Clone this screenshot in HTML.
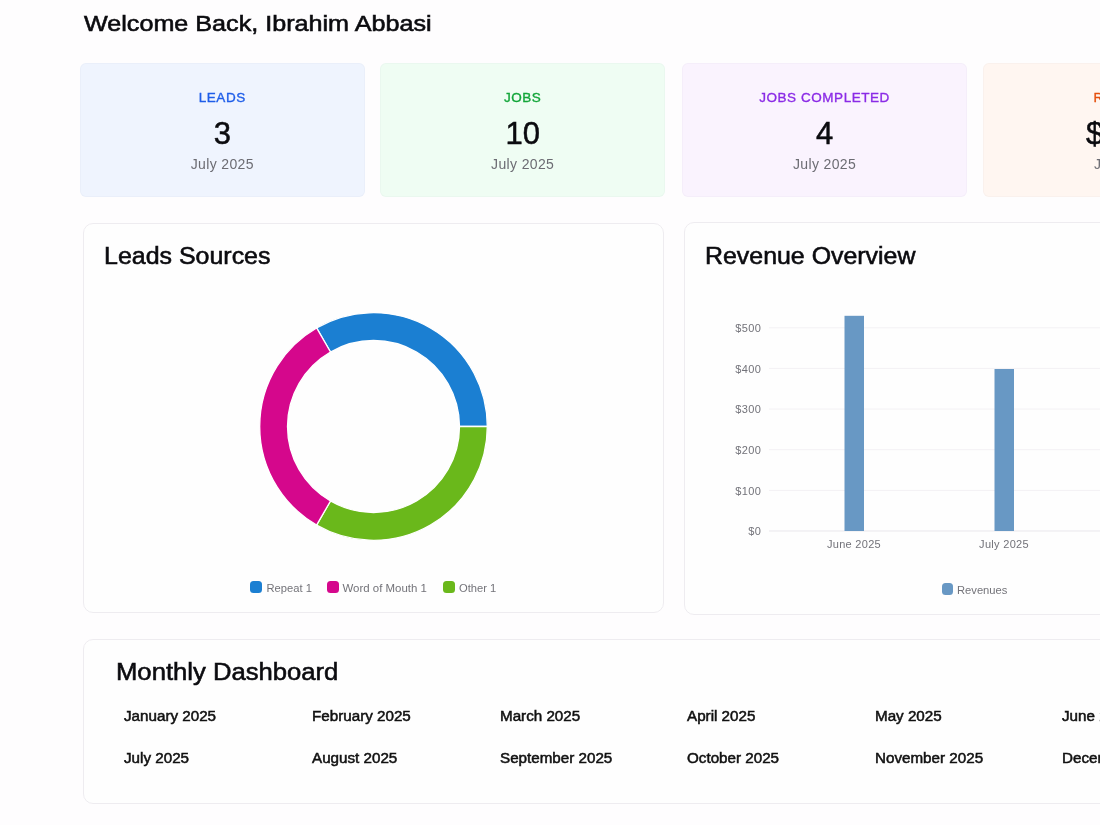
<!DOCTYPE html>
<html><head><meta charset="utf-8">
<style>
*{box-sizing:border-box;margin:0;padding:0}
html,body{width:1100px;height:825px;overflow:hidden;background:#fefdfe;font-family:"Liberation Sans",sans-serif;color:#0b0b0f}
.abs{position:absolute}
h1{position:absolute;left:83px;top:13.1px;font-size:22.6px;font-weight:400;letter-spacing:0px;-webkit-text-stroke:0.6px #0b0b0f;line-height:1;white-space:nowrap;transform:scaleX(1.113);transform-origin:0 0}
.stat{position:absolute;top:62.8px;width:284.5px;height:134.7px;border-radius:6px;box-shadow:inset 0 0 0 1px rgba(60,40,80,0.022)}
.stat .lab{position:absolute;left:0;right:0;top:27.9px;text-align:center;font-size:13.5px;letter-spacing:0.55px;line-height:1;white-space:nowrap}
.stat .num{position:absolute;left:0;right:0;top:55.4px;text-align:center;font-size:31px;line-height:1;-webkit-text-stroke:0.5px #0b0b0f}
.stat .dt{position:absolute;left:0;right:0;top:94.1px;text-align:center;font-size:14px;color:#6c6c73;line-height:1;letter-spacing:0.35px}
.card{position:absolute;border:1px solid #eeecf0;border-radius:10px;background:#fefefe}
.ct{position:absolute;font-size:23px;letter-spacing:0px;-webkit-text-stroke:0.55px #0b0b0f;line-height:1;white-space:nowrap}
.leg{position:absolute;font-size:11.2px;color:#737379;line-height:1;white-space:nowrap}
.sq{position:absolute;width:12px;height:12px;border-radius:3.5px}
.mo{position:absolute;transform:scaleX(1.085);transform-origin:0 0;font-size:14px;letter-spacing:0px;-webkit-text-stroke:0.5px #111;line-height:1;white-space:nowrap;color:#111}
</style></head>
<body>
<div id="root" style="position:absolute;left:0;top:0;width:1100px;height:825px;will-change:transform">
<h1 style="left:84.3px">Welcome Back, Ibrahim Abbasi</h1>
<div class="stat" style="left:80.0px;background:#eff4fe">
  <div class="lab" style="color:#1f5ee9;-webkit-text-stroke:0.35px #1f5ee9">LEADS</div>
  <div class="num">3</div>
  <div class="dt">July 2025</div>
</div>
<div class="stat" style="left:380.4px;background:#effdf3">
  <div class="lab" style="color:#13a63a;-webkit-text-stroke:0.35px #13a63a">JOBS</div>
  <div class="num">10</div>
  <div class="dt">July 2025</div>
</div>
<div class="stat" style="left:682.3px;background:#faf3fe">
  <div class="lab" style="color:#8b2be6;-webkit-text-stroke:0.35px #8b2be6">JOBS COMPLETED</div>
  <div class="num">4</div>
  <div class="dt">July 2025</div>
</div>
<div class="stat" style="left:983.3px;background:#fff6f1">
  <div class="lab" style="padding-left:5px;color:#e5500e;-webkit-text-stroke:0.35px #e5500e">REVENUE</div>
  <div class="num"><span style="letter-spacing:2.5px">$400</span></div>
  <div class="dt">July 2025</div>
</div>

<div class="card" style="left:83px;top:223px;width:581px;height:390px"></div>
<div class="ct" style="left:104.0px;top:245.1px;transform:scaleX(1.085);transform-origin:0 0">Leads Sources</div>
<div class="card" style="left:684px;top:222px;width:600px;height:393px"></div>
<div class="ct" style="left:704.5px;top:245.1px;transform:scaleX(1.083);transform-origin:0 0">Revenue Overview</div>
<div class="card" style="left:83px;top:639px;width:1200px;height:165px"></div>
<div class="ct" style="left:116.0px;top:660.9px;transform:scaleX(1.115);transform-origin:0 0">Monthly Dashboard</div>
<svg class="abs" style="left:0;top:0;font-family:'Liberation Sans'" width="1100" height="825">
<path d="M316.60 327.95A113.8 113.8 0 0 1 487.30 426.50L459.50 426.50A86.0 86.0 0 0 0 330.50 352.02Z" fill="#1b7fd2" stroke="#fff" stroke-width="1.3"/>
<path d="M487.30 426.50A113.8 113.8 0 0 1 316.60 525.05L330.50 500.98A86.0 86.0 0 0 0 459.50 426.50Z" fill="#6ab81b" stroke="#fff" stroke-width="1.3"/>
<path d="M316.60 525.05A113.8 113.8 0 0 1 316.60 327.95L330.50 352.02A86.0 86.0 0 0 0 330.50 500.98Z" fill="#d5078c" stroke="#fff" stroke-width="1.3"/>
<line x1="769" y1="531.0" x2="1100" y2="531.0" stroke="#e9e7ec" stroke-width="1"/>
<text x="761.3" y="535.2" text-anchor="end" font-size="11" fill="#727279" letter-spacing="0.4">$0</text>
<line x1="769" y1="490.4" x2="1100" y2="490.4" stroke="#f3f1f4" stroke-width="1"/>
<text x="761.3" y="494.6" text-anchor="end" font-size="11" fill="#727279" letter-spacing="0.4">$100</text>
<line x1="769" y1="449.7" x2="1100" y2="449.7" stroke="#f3f1f4" stroke-width="1"/>
<text x="761.3" y="453.9" text-anchor="end" font-size="11" fill="#727279" letter-spacing="0.4">$200</text>
<line x1="769" y1="409.1" x2="1100" y2="409.1" stroke="#f3f1f4" stroke-width="1"/>
<text x="761.3" y="413.2" text-anchor="end" font-size="11" fill="#727279" letter-spacing="0.4">$300</text>
<line x1="769" y1="368.4" x2="1100" y2="368.4" stroke="#f3f1f4" stroke-width="1"/>
<text x="761.3" y="372.6" text-anchor="end" font-size="11" fill="#727279" letter-spacing="0.4">$400</text>
<line x1="769" y1="327.8" x2="1100" y2="327.8" stroke="#f3f1f4" stroke-width="1"/>
<text x="761.3" y="331.9" text-anchor="end" font-size="11" fill="#727279" letter-spacing="0.4">$500</text>
<rect x="844.5" y="315.8" width="19.5" height="215.2" fill="#6898c4"/>
<rect x="994.5" y="369" width="19.5" height="162.0" fill="#6898c4"/>
<text x="854" y="547.6" text-anchor="middle" font-size="11" fill="#727279" letter-spacing="0.3">June 2025</text>
<text x="1004" y="547.6" text-anchor="middle" font-size="11" fill="#727279" letter-spacing="0.3">July 2025</text>
</svg>
<div class="sq" style="left:250.4px;top:581.2px;background:#1b7fd2"></div><div class="leg" style="left:266.5px;top:582.9px">Repeat 1</div>
<div class="sq" style="left:326.8px;top:581.2px;background:#d5078c"></div><div class="leg" style="left:342.5px;top:582.8px;font-size:11.45px">Word of Mouth 1</div>
<div class="sq" style="left:443.3px;top:581.2px;background:#6ab81b"></div><div class="leg" style="left:459px;top:582.9px">Other 1</div>
<div class="sq" style="left:941.6px;top:583px;width:11.3px;height:11.5px;background:#6898c4"></div><div class="leg" style="left:957px;top:584.7px;font-size:11.2px">Revenues</div>
<div class="mo" style="left:124.3px;top:709.2px">January 2025</div>
<div class="mo" style="left:311.9px;top:709.2px">February 2025</div>
<div class="mo" style="left:499.5px;top:709.2px">March 2025</div>
<div class="mo" style="left:687.1px;top:709.2px">April 2025</div>
<div class="mo" style="left:874.7px;top:709.2px">May 2025</div>
<div class="mo" style="left:1062.3px;top:709.2px">June 2025</div>
<div class="mo" style="left:124.3px;top:750.9px">July 2025</div>
<div class="mo" style="left:311.9px;top:750.9px">August 2025</div>
<div class="mo" style="left:499.5px;top:750.9px">September 2025</div>
<div class="mo" style="left:687.1px;top:750.9px">October 2025</div>
<div class="mo" style="left:874.7px;top:750.9px">November 2025</div>
<div class="mo" style="left:1062.3px;top:750.9px">December 2025</div>
</div>
</body></html>
